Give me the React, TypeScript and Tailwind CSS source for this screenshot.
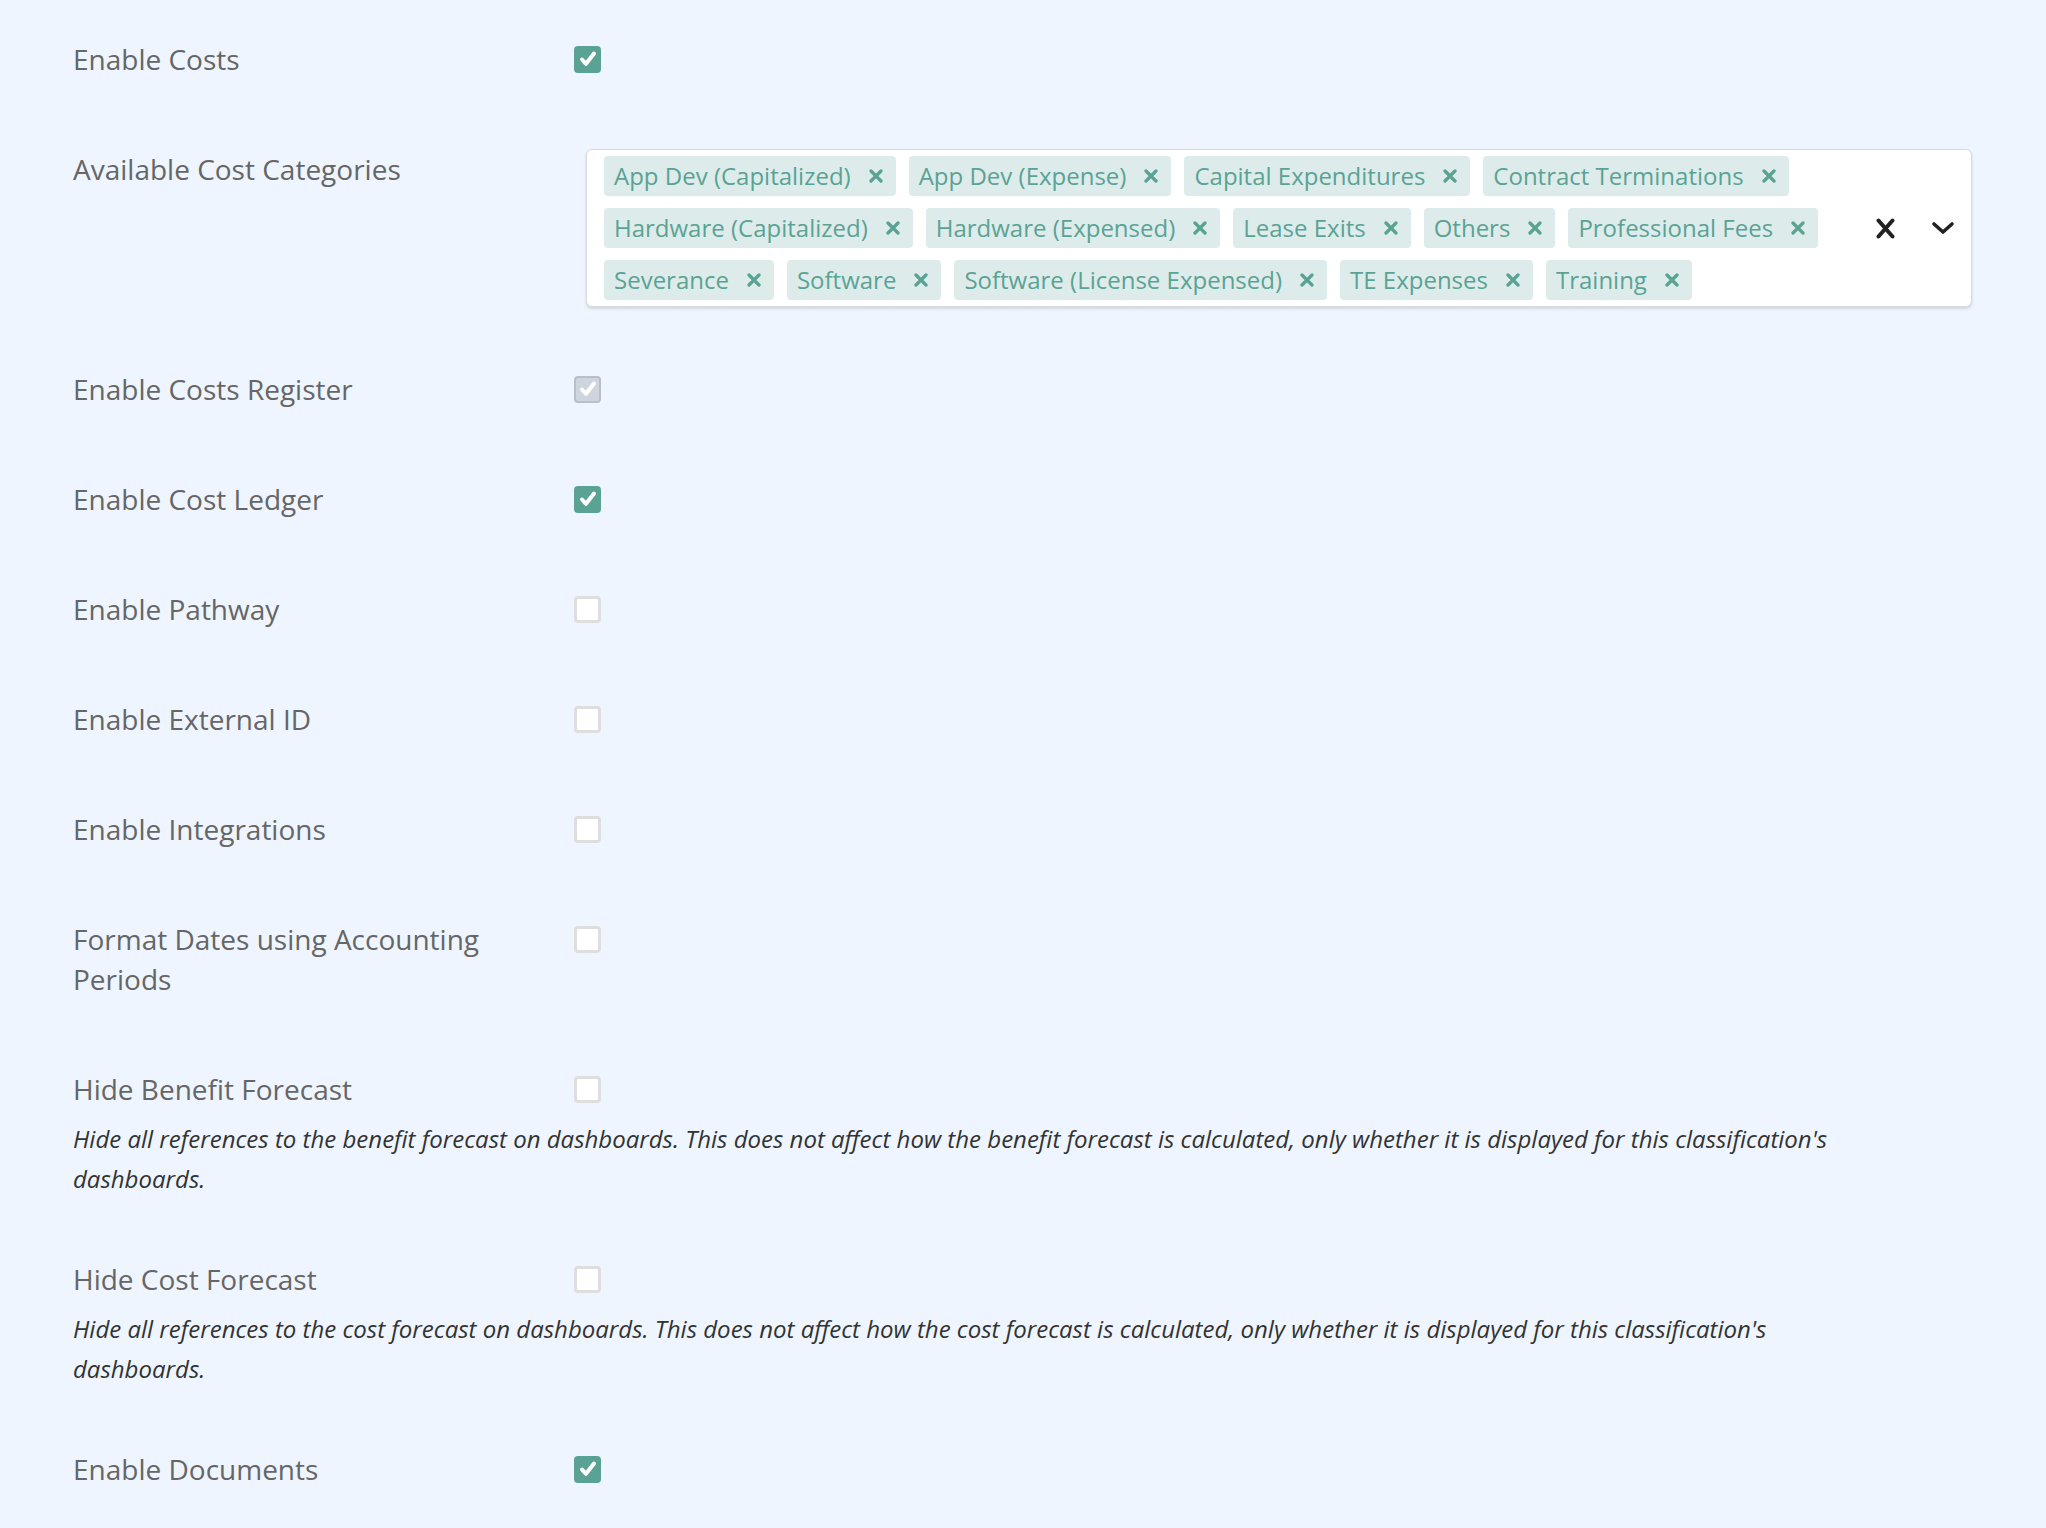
import React from "react";

type Kind = "on" | "off" | "disabled";

function Check({ color }: { color: string }) {
  return (
    <svg width="20" height="20" viewBox="0 0 20 20" fill="none">
      <path d="M4 10.5 L8 14.8 L16 4.5" stroke={color} strokeWidth="4" strokeLinecap="round" strokeLinejoin="round" />
    </svg>
  );
}

function Box({ kind }: { kind: Kind }) {
  if (kind === "on")
    return (
      <div className="w-[27px] h-[27px] rounded-[4px] bg-[#5aa394] flex items-center justify-center">
        <Check color="#ffffff" />
      </div>
    );
  if (kind === "disabled")
    return (
      <div className="w-[27px] h-[27px] rounded-[4px] bg-[#cfd5de] border-2 border-[#b9bfc9] flex items-center justify-center">
        <Check color="#ffffff" />
      </div>
    );
  return <div className="w-[27px] h-[27px] rounded-[4px] bg-white border-[3px] border-[#dedede]" />;
}

function TagX() {
  return (
    <svg width="14" height="14" viewBox="0 0 14 14" fill="none">
      <path d="M2 2 L12 12 M12 2 L2 12" stroke="#5aa394" strokeWidth="3.3" strokeLinecap="round" />
    </svg>
  );
}

const tags = [
  "App Dev (Capitalized)",
  "App Dev (Expense)",
  "Capital Expenditures",
  "Contract Terminations",
  "Hardware (Capitalized)",
  "Hardware (Expensed)",
  "Lease Exits",
  "Others",
  "Professional Fees",
  "Severance",
  "Software",
  "Software (License Expensed)",
  "TE Expenses",
  "Training",
];

function Label({ children }: { children: React.ReactNode }) {
  return <div className="w-[501px] shrink-0 pr-[30px] text-[28px] leading-[40px] text-[#666666]">{children}</div>;
}

function Row({ label, kind, desc, last }: { label: React.ReactNode; kind: Kind; desc?: string; last?: boolean }) {
  return (
    <div className={last ? "" : desc ? "mb-[60px]" : "mb-[70px]"}>
      <div className="flex items-start">
        <Label>{label}</Label>
        <div className="h-[40px] flex items-center">
          <Box kind={kind} />
        </div>
      </div>
      {desc && (
        <p className="mt-[10px] max-w-[1790px] text-[24px] leading-[40px] italic text-[#333333]">{desc}</p>
      )}
    </div>
  );
}

export default function App() {
  return (
    <div
      className="min-h-screen bg-[#eef5ff] pl-[73px] pt-[39px] pb-[40px]"
      style={{ fontFamily: '"Open Sans", "Noto Sans", sans-serif' }}
    >
      <Row label="Enable Costs" kind="on" />
      <div className="flex items-start mb-[62px]">
        <Label>Available Cost Categories</Label>
        <div className="ml-[12px] w-[1386px] flex bg-white border border-[#dadada] rounded-[6px] shadow-[0_2px_3px_rgba(0,0,0,0.12)]">
          <div className="flex-1 flex flex-wrap gap-x-[13px] gap-y-[12px] pl-[17px] py-[6px]">
            {tags.map((t) => (
              <div
                key={t}
                className="h-[40px] flex items-center pl-[10px] pr-[13px] gap-[18px] bg-[#ddeceb] rounded-[4px] text-[24px] text-[#5aa394]"
              >
                <span>{t}</span>
                <TagX />
              </div>
            ))}
          </div>
          <div className="w-[116px] shrink-0 flex items-center pl-[21px] gap-[36px]">
            <svg width="19" height="21" viewBox="0 0 19 21" fill="none">
              <path d="M2.5 2.5 L16.5 18.5 M16.5 2.5 L2.5 18.5" stroke="#222222" strokeWidth="4" strokeLinecap="round" />
            </svg>
            <svg width="24" height="14" viewBox="0 0 24 14" fill="none">
              <path d="M3 3 L12 11 L21 3" stroke="#222222" strokeWidth="3.6" strokeLinecap="round" strokeLinejoin="round" />
            </svg>
          </div>
        </div>
      </div>
      <Row label="Enable Costs Register" kind="disabled" />
      <Row label="Enable Cost Ledger" kind="on" />
      <Row label="Enable Pathway" kind="off" />
      <Row label="Enable External ID" kind="off" />
      <Row label="Enable Integrations" kind="off" />
      <Row label="Format Dates using Accounting Periods" kind="off" />
      <Row
        label="Hide Benefit Forecast"
        kind="off"
        desc="Hide all references to the benefit forecast on dashboards. This does not affect how the benefit forecast is calculated, only whether it is displayed for this classification's dashboards."
      />
      <Row
        label="Hide Cost Forecast"
        kind="off"
        desc="Hide all references to the cost forecast on dashboards. This does not affect how the cost forecast is calculated, only whether it is displayed for this classification's dashboards."
      />
      <Row label="Enable Documents" kind="on" last />
    </div>
  );
}
